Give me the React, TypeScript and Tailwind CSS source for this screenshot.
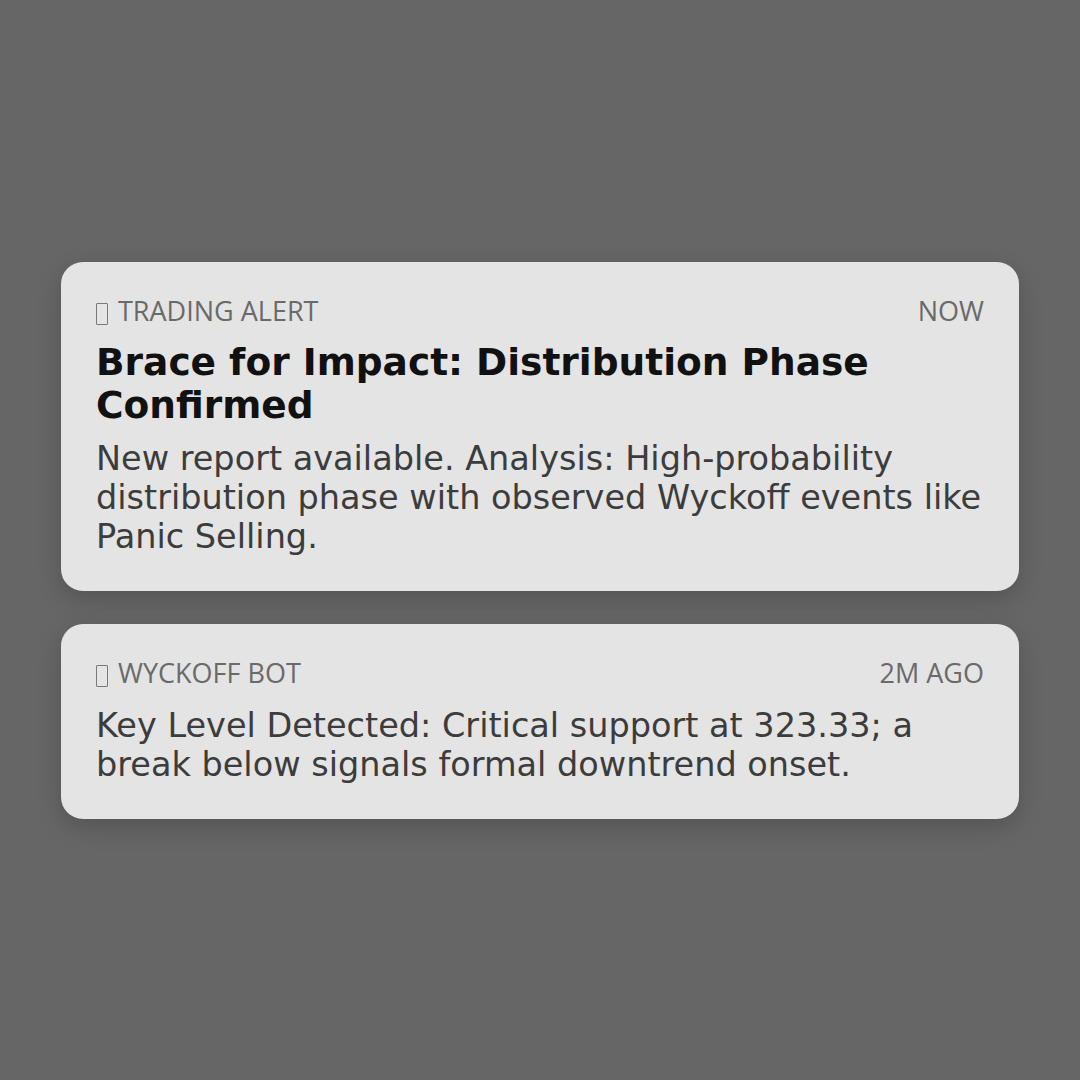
import React from 'react';

interface NotificationProps {
  source: string;
  time: string;
  title?: string;
  body: string;
}

// the source icon shows as an empty glyph box in the original, so draw just the box
const GlyphBox: React.FC = () => (
  <span
    aria-hidden="true"
    className="inline-block w-[12px] h-[22px] border-[1.5px] border-[#7a7a7a] rounded-[1px] mr-[10px] translate-y-[3px]"
  />
);

const Notification: React.FC<NotificationProps> = ({ source, time, title, body }) => (
  <div className="w-full rounded-[22px] bg-[#e4e4e4] px-[35px] pt-[31px] pb-[35px] shadow-[0_8px_24px_rgba(0,0,0,0.18)]">
    <div className="flex items-center justify-between text-[27px] leading-[36px] text-[#6a6a6a] font-['Open_Sans',sans-serif]">
      <span className="flex items-center">
        <GlyphBox />
        {source}
      </span>
      <span>{time}</span>
    </div>
    {title && (
      <h2 className="mt-[12px] text-[37.5px] leading-[43px] font-bold text-[#111111] font-['DejaVu_Sans',sans-serif]">
        {title}
      </h2>
    )}
    <p
      className={
        title
          ? 'mt-[12px] text-[33.5px] leading-[39px] text-[#3c3c3c] font-["DejaVu_Sans",sans-serif]'
          : 'mt-[15px] text-[33.5px] leading-[39px] text-[#3c3c3c] font-["DejaVu_Sans",sans-serif]'
      }
    >
      {body}
    </p>
  </div>
);

export default function App() {
  return (
    <div className="w-[1080px] h-[1080px] bg-[#666666] flex flex-col justify-center gap-[33px] px-[61px]">
      <Notification
        source="TRADING ALERT"
        time="NOW"
        title="Brace for Impact: Distribution Phase Confirmed"
        body="New report available. Analysis: High-probability distribution phase with observed Wyckoff events like Panic Selling."
      />
      <Notification
        source="WYCKOFF BOT"
        time="2M AGO"
        body="Key Level Detected: Critical support at 323.33; a break below signals formal downtrend onset."
      />
    </div>
  );
}
